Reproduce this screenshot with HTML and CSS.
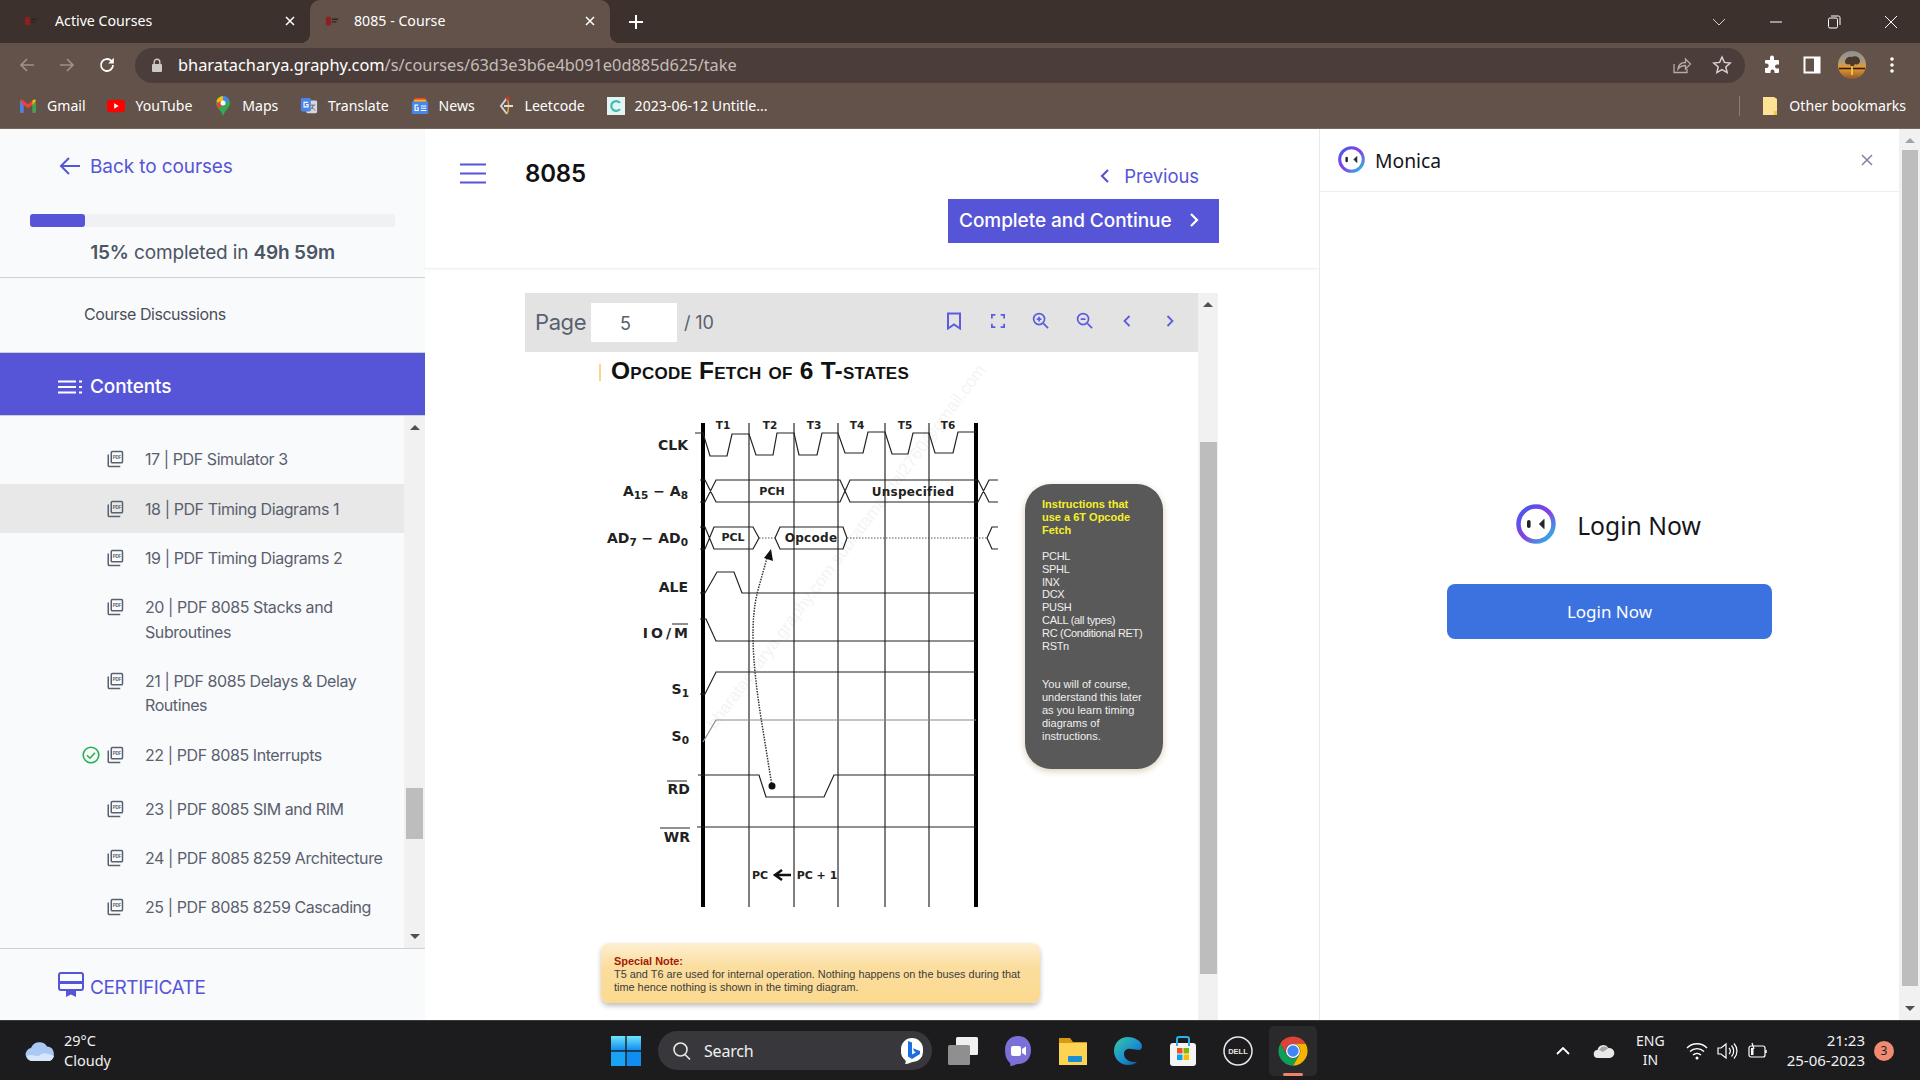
FILE: index.html
```html
<!DOCTYPE html>
<html lang="en">
<head>
    <meta charset="UTF-8">
    <meta name="viewport" content="width=device-width, initial-scale=1.0">
    <title>8085 - Course</title>
    <link rel="stylesheet" href="styles.css">
</head>
<body>
    <svg class="defs" width="0" height="0">
        <defs>
            <linearGradient id="monicaRing" x1="0" y1="0" x2="1" y2="1">
                <stop offset="0" stop-color="#3f5cf0"/>
                <stop offset="0.5" stop-color="#8a3fe0"/>
                <stop offset="1" stop-color="#1fc4e8"/>
            </linearGradient>
            <linearGradient id="winTile" x1="0" y1="0" x2="0" y2="1">
                <stop offset="0" stop-color="#6fe3fb"/>
                <stop offset="1" stop-color="#0f8ef0"/>
            </linearGradient>
            <linearGradient id="edgeFill" x1="0" y1="0" x2="1" y2="1">
                <stop offset="0" stop-color="#36c9a0"/>
                <stop offset="0.55" stop-color="#1b8fd0"/>
                <stop offset="1" stop-color="#0c4f9c"/>
            </linearGradient>
            <linearGradient id="sunset" x1="0" y1="0" x2="0" y2="1">
                <stop offset="0" stop-color="#8d9097"/>
                <stop offset="0.4" stop-color="#b09a78"/>
                <stop offset="0.6" stop-color="#ee9a2e"/>
                <stop offset="1" stop-color="#8a5a30"/>
            </linearGradient>
            <symbol id="monica" viewBox="0 0 40 40">
                <circle cx="20" cy="20" r="17.5" fill="#fff" stroke="url(#monicaRing)" stroke-width="4.5"/>
                <rect x="11" y="16" width="3.6" height="8" rx="1.8" fill="#222"/>
                <path d="M28 15.5 L23.5 20 L28 24.5 V15.5Z" fill="#222" stroke="#222" stroke-linejoin="round"/>
            </symbol>
            <symbol id="pdf" viewBox="0 0 24 24">
                <rect x="7" y="2" width="15" height="15" rx="1.5" fill="none" stroke="currentColor" stroke-width="2"/>
                <path d="M3 6v14.5A1.5 1.5 0 0 0 4.5 22H19" fill="none" stroke="currentColor" stroke-width="2"/>
                <text x="14.5" y="11.8" text-anchor="middle" class="pdf-mark">PDF</text>
            </symbol>
        </defs>
    </svg>

    <header class="chrome">
        <div class="tabstrip">
            <div class="tab">
                <svg class="favicon" viewBox="0 0 16 16"><rect x="1" y="3" width="6" height="10" rx="2" fill="#8c1f1f"/><path d="M8 6h7M8 9h5" stroke="#2f2420" stroke-width="1.5"/></svg>
                <span class="tab-title">Active Courses</span>
                <svg class="tab-close" viewBox="0 0 12 12"><path d="M2 2l8 8M10 2l-8 8" stroke="#fff" stroke-width="1.5"/></svg>
            </div>
            <div class="tab tab-active">
                <svg class="favicon" viewBox="0 0 16 16"><rect x="1" y="3" width="6" height="10" rx="2" fill="#8c1f1f"/><path d="M8 6h7M8 9h5" stroke="#2f2420" stroke-width="1.5"/></svg>
                <span class="tab-title">8085 - Course</span>
                <svg class="tab-close" viewBox="0 0 12 12"><path d="M2 2l8 8M10 2l-8 8" stroke="#fff" stroke-width="1.5"/></svg>
            </div>
            <svg class="new-tab" viewBox="0 0 16 16"><path d="M8 1v14M1 8h14" stroke="#fff" stroke-width="2"/></svg>
            <div class="window-controls">
                <svg class="tab-search" viewBox="0 0 14 8"><path d="M1 1l6 6 6-6" fill="none" stroke="#d8d2cf" stroke-width="1"/></svg>
                <span class="win-btn"><svg viewBox="0 0 14 14" width="14" height="14"><path d="M1 7h12" stroke="#fff"/></svg></span>
                <span class="win-btn"><svg viewBox="0 0 14 14" width="14" height="14"><rect x="1.5" y="3" width="9" height="10" rx="1.5" fill="none" stroke="#fff"/><path d="M4 1h7.5A1.5 1.5 0 0 1 13 2.5V10" fill="none" stroke="#fff"/></svg></span>
                <span class="win-btn"><svg viewBox="0 0 14 14" width="14" height="14"><path d="M1 1l12 12M13 1L1 13" stroke="#fff"/></svg></span>
            </div>
        </div>

        <div class="toolbar">
            <span class="tool-btn"><svg viewBox="0 0 18 18" width="18" height="18"><path d="M16 9H3M9 3L3 9l6 6" fill="none" stroke="#9c928c" stroke-width="1.7"/></svg></span>
            <span class="tool-btn"><svg viewBox="0 0 18 18" width="18" height="18"><path d="M2 9h13M9 3l6 6-6 6" fill="none" stroke="#9c928c" stroke-width="1.7"/></svg></span>
            <span class="tool-btn"><svg viewBox="0 0 18 18" width="18" height="18"><path d="M15 9a6 6 0 1 1-1.8-4.3L15 6.5" fill="none" stroke="#fff" stroke-width="1.8"/><path d="M15.8 1.8v5.6h-5.6z" fill="#fff"/></svg></span>
            <div class="omnibox">
                <svg class="lock" viewBox="0 0 12 14" width="12" height="14"><rect x="1" y="6" width="10" height="8" rx="1" fill="#cfc9c5"/><path d="M3.2 6V4a2.8 2.8 0 0 1 5.6 0v2" fill="none" stroke="#cfc9c5" stroke-width="1.4"/></svg>
                <span class="url"><b class="url-host">bharatacharya.graphy.com</b>/s/courses/63d3e3b6e4b091e0d885d625/take</span>
                <span class="tool-btn"><svg viewBox="0 0 20 20" width="20" height="20"><path d="M2 9v8.5h13V14" fill="none" stroke="#b5aca7" stroke-width="1.3"/><path d="M6 14c.5-4 3.500-6.500 7.500-6.500V4l5 5-5 5v-3.500c-3 0-5.500 1-7.500 3.500z" fill="none" stroke="#b5aca7" stroke-width="1.3"/></svg></span>
                <span class="tool-btn"><svg viewBox="0 0 20 20" width="20" height="20"><path d="M10 2l2.400 5.400 5.800.6-4.400 3.900 1.300 5.700L10 14.700l-5.100 2.900 1.300-5.700L1.800 8l5.800-.6z" fill="none" stroke="#d8d2cf" stroke-width="1.500"/></svg></span>
            </div>
            <span class="tool-btn tool-first"><svg viewBox="0 0 20 20" width="20" height="20"><path d="M8 2.500a2 2 0 0 1 4 0V5h4a1 1 0 0 1 1 1v3.500h-2a2 2 0 0 0 0 4h2V17a1 1 0 0 1-1 1h-3.500v-1.500a2 2 0 0 0-4 0V18H4a1 1 0 0 1-1-1v-4h1.500a2.200 2.200 0 0 0 0-4.400H3V6a1 1 0 0 1 1-1h4z" fill="#fff"/></svg></span>
            <span class="tool-btn"><svg viewBox="0 0 20 20" width="20" height="20"><rect x="2.500" y="2.500" width="15" height="15" fill="none" stroke="#fff" stroke-width="2"/><rect x="12" y="3" width="5" height="14" fill="#fff"/></svg></span>
            <span class="tool-btn"><svg class="avatar" viewBox="0 0 28 28" width="28" height="28"><circle cx="14" cy="14" r="14" fill="url(#sunset)"/><path d="M7 11c0-4 4-6 7-5 3-2 8 0 8 4 0 3-3 4-5 3l-2 3h-2l-1-3c-2 1-5 0-5-2z" fill="#4a3a2c"/><path d="M1 17.500h26" stroke="#2e1c10" stroke-width="1.600"/><path d="M13 15h2v9h-2z" fill="#ffd23c" opacity="0.8"/></svg></span>
            <span class="tool-btn"><svg viewBox="0 0 6 20" width="6" height="20"><circle cx="3" cy="4" r="1.800" fill="#fff"/><circle cx="3" cy="10" r="1.800" fill="#fff"/><circle cx="3" cy="16" r="1.800" fill="#fff"/></svg></span>
        </div>

        <div class="bookmarks">
            <span class="bookmark"><svg viewBox="0 0 16 16" class="bm-icon"><path d="M1 3v11h3V7l4 3 4-3v7h3V3l-1.500-1L8 6.500 2.500 2z" fill="#ea4335"/><path d="M1 3v11h3V7z" fill="#4285f4"/><path d="M15 3v11h-3V7z" fill="#34a853"/><path d="M12 7l3-4-1.500-1L12 3.200z" fill="#fbbc05"/></svg>Gmail</span>
            <span class="bookmark"><svg viewBox="0 0 20 20" class="bm-icon"><rect y="3" width="20" height="14" rx="4" fill="#f00"/><path d="M8 7l5 3-5 3z" fill="#fff"/></svg>YouTube</span>
            <span class="bookmark"><svg viewBox="0 0 16 20" class="bm-icon"><path d="M8 0a7 7 0 0 1 7 7c0 4.500-5 7-7 13-2-6-7-8.500-7-13a7 7 0 0 1 7-7z" fill="#34a853"/><path d="M3 2.500A7 7 0 0 1 8 0v5L4.500 8.500 1.500 5z" fill="#fbbc05"/><path d="M8 0a7 7 0 0 1 6 3.500L11 7 8 4z" fill="#4285f4"/><path d="M1.400 8.500L5 5l3 3-4.500 5z" fill="#ea4335"/><circle cx="8" cy="7" r="2.500" fill="#fff"/></svg>Maps</span>
            <span class="bookmark"><svg viewBox="0 0 20 20" class="bm-icon"><rect x="7" y="4" width="12" height="14" rx="1.500" fill="#d4d8de"/><rect x="1" y="1" width="11" height="15" rx="1.500" fill="#4a86e8"/><path d="M9 6H4.500v5H9V8.500H6.800" fill="none" stroke="#fff" stroke-width="1.200"/><path d="M12 9h5M14.500 9c0 3-2 4.500-2.500 5M13 11c1 2 2.500 3 4 3.500" fill="none" stroke="#5f6368" stroke-width="1"/></svg>Translate</span>
            <span class="bookmark"><svg viewBox="0 0 20 20" class="bm-icon"><path d="M4 1h12v5H4z" fill="#ea4335"/><path d="M3 3h14v4H3z" fill="#fbbc05"/><rect x="1" y="5" width="18" height="14" rx="1.500" fill="#4a86e8"/><path d="M8 9H4.500v6H8v-3H6.300M11 10h6M11 12.500h6M11 15h6" fill="none" stroke="#fff" stroke-width="1.300"/></svg>News</span>
            <span class="bookmark"><svg viewBox="0 0 16 20" class="bm-icon"><path d="M9 2L3 10l6 8" fill="none" stroke="#d8d2cf" stroke-width="2"/><path d="M9 2c2 4 2 12 0 16" fill="none" stroke="#e8a33d" stroke-width="1.500"/><path d="M6 10h9" stroke="#ddd" stroke-width="2"/><circle cx="10" cy="2.500" r="2" fill="#c0392b"/></svg>Leetcode</span>
            <span class="bookmark"><svg viewBox="0 0 20 20" class="bm-icon"><rect width="20" height="20" fill="#e2f5f2"/><path d="M14.500 6.500a5.500 5.500 0 1 0 0 7" fill="none" stroke="#3dbdb0" stroke-width="2.400"/></svg>2023-06-12 Untitle...</span>
            <span class="bookmarks-sep"></span>
            <span class="bookmark"><svg viewBox="0 0 16 20" class="bm-icon"><path d="M1 1h11l3 2v16H1z" fill="#fde293"/><path d="M12 15h3v4h-3z" fill="#f4c542"/></svg>Other bookmarks</span>
        </div>
    </header>

    <div class="page">
        <aside class="sidebar">
            <a class="back-link"><svg viewBox="0 0 22 20" width="22" height="20"><path d="M21 10H2M10 2l-8 8 8 8" fill="none" stroke="#5655d7" stroke-width="2"/></svg>Back to courses</a>
            <div class="progress-track"><div class="progress-fill" style="width: 15%"></div></div>
            <p class="progress-text"><b>15%</b> completed in <b>49h 59m</b></p>
            <div class="discussions">Course Discussions</div>
            <div class="contents-bar">
                <svg viewBox="0 0 24 14" width="24" height="14"><path d="M0 1.500h18M0 7h18M0 12.500h18M21 1.500h3M21 7h3M21 12.500h3" stroke="#fff" stroke-width="2.200"/></svg>
                Contents
            </div>
            <div class="list-wrap">
                <ul class="lesson-list">
                    <li class="lesson"><span class="check-slot"></span><svg class="pdf-icon"><use href="#pdf"/></svg><span class="lesson-name">17 | PDF Simulator 3</span></li>
                    <li class="lesson lesson-current"><span class="check-slot"></span><svg class="pdf-icon"><use href="#pdf"/></svg><span class="lesson-name">18 | PDF Timing Diagrams 1</span></li>
                    <li class="lesson"><span class="check-slot"></span><svg class="pdf-icon"><use href="#pdf"/></svg><span class="lesson-name">19 | PDF Timing Diagrams 2</span></li>
                    <li class="lesson"><span class="check-slot"></span><svg class="pdf-icon"><use href="#pdf"/></svg><span class="lesson-name">20 | PDF 8085 Stacks and Subroutines</span></li>
                    <li class="lesson"><span class="check-slot"></span><svg class="pdf-icon"><use href="#pdf"/></svg><span class="lesson-name">21 | PDF 8085 Delays &amp; Delay Routines</span></li>
                    <li class="lesson lesson-done">
                        <span class="check-slot"><svg viewBox="0 0 18 18" width="18" height="18"><circle cx="9" cy="9" r="7.800" fill="none" stroke="#22b14c" stroke-width="1.600"/><path d="M5 9.200l3 3 5-5.500" fill="none" stroke="#22b14c" stroke-width="1.600"/></svg></span>
                        <svg class="pdf-icon"><use href="#pdf"/></svg><span class="lesson-name">22 | PDF 8085 Interrupts</span>
                    </li>
                    <li class="lesson lesson-after-done"><span class="check-slot"></span><svg class="pdf-icon"><use href="#pdf"/></svg><span class="lesson-name">23 | PDF 8085 SIM and RIM</span></li>
                    <li class="lesson"><span class="check-slot"></span><svg class="pdf-icon"><use href="#pdf"/></svg><span class="lesson-name">24 | PDF 8085 8259 Architecture</span></li>
                    <li class="lesson"><span class="check-slot"></span><svg class="pdf-icon"><use href="#pdf"/></svg><span class="lesson-name">25 | PDF 8085 8259 Cascading</span></li>
                    <li class="lesson"><span class="check-slot"></span><svg class="pdf-icon"><use href="#pdf"/></svg></li>
                </ul>
                <div class="scrollbar scrollbar-list">
                    <span class="arrow-up arrow-dark"></span>
                    <span class="thumb thumb-list"></span>
                    <span class="arrow-down arrow-dark"></span>
                </div>
            </div>
            <div class="certificate">
                <svg viewBox="0 0 26 25" width="26" height="25"><rect x="1" y="1" width="24" height="17" rx="2" fill="none" stroke="#5655d7" stroke-width="2"/><rect x="1" y="9" width="24" height="3" fill="#5655d7"/><path d="M8 17h10v8l-5-2.500L8 25z" fill="#5655d7"/></svg>
                CERTIFICATE
            </div>
        </aside>

        <main class="course-main">
            <div class="course-head">
                <svg class="hamburger" viewBox="0 0 26 21" width="26" height="21"><path d="M0 1.500h26M0 10.500h26M0 19.500h26" stroke="#5655d7" stroke-width="2"/></svg>
                <h1 class="lesson-title">8085</h1>
                <div class="head-actions">
                    <a class="prev-link"><svg viewBox="0 0 10 16" width="10" height="16"><path d="M8 2L2 8l6 6" fill="none" stroke="#5655d7" stroke-width="2.200"/></svg>Previous</a>
                    <button class="continue-btn">Complete and Continue<svg viewBox="0 0 10 16" width="10" height="16"><path d="M2 2l6 6-6 6" fill="none" stroke="#fff" stroke-width="2.200"/></svg></button>
                </div>
            </div>

            <div class="viewer">
                <div class="doc">
                    <div class="doc-bar">
                        <span class="page-word">Page</span>
                        <span class="page-input">5</span>
                        <span class="page-total">/ 10</span>
                        <span class="doc-tools">
                            <span class="doc-tool"><svg viewBox="0 0 16 18" width="16" height="18"><path d="M2 1.500h12v15l-6-4-6 4z" fill="none" stroke="#5d5ce0" stroke-width="2"/></svg></span>
                            <span class="doc-tool"><svg viewBox="0 0 16 16" width="14" height="14"><path d="M1 5V1h4M11 1h4v4M15 11v4h-4M5 15H1v-4" fill="none" stroke="#5d5ce0" stroke-width="2"/></svg></span>
                            <span class="doc-tool"><svg viewBox="0 0 18 18" width="17" height="17"><circle cx="7.500" cy="7.500" r="5.800" fill="none" stroke="#5d5ce0" stroke-width="1.800"/><path d="M12 12l5 5M5 7.500h5M7.500 5v5" fill="none" stroke="#5d5ce0" stroke-width="1.800"/></svg></span>
                            <span class="doc-tool"><svg viewBox="0 0 18 18" width="17" height="17"><circle cx="7.500" cy="7.500" r="5.800" fill="none" stroke="#5d5ce0" stroke-width="1.800"/><path d="M12 12l5 5M5 7.500h5" fill="none" stroke="#5d5ce0" stroke-width="1.800"/></svg></span>
                            <span class="doc-tool"><svg viewBox="0 0 10 14" width="10" height="14"><path d="M7.500 2L2.500 7l5 5" fill="none" stroke="#5d5ce0" stroke-width="1.800"/></svg></span>
                            <span class="doc-tool"><svg viewBox="0 0 10 14" width="10" height="14"><path d="M2.500 2l5 5-5 5" fill="none" stroke="#5d5ce0" stroke-width="1.800"/></svg></span>
                        </span>
                    </div>
                    <div class="slide">
                        <svg class="timing" viewBox="525 352 673 668" width="673" height="668">
                            <text class="wm" transform="translate(715 730) rotate(-53)">bharatacharya.graphy.com subratamandal2760@gmail.com</text>

                            <rect x="599" y="364" width="2" height="17" fill="#fbd68a"/>
                            <text x="611" y="378.500" class="slide-title">Opcode Fetch of 6 T-states</text>

                            <!-- grid -->
                            <path class="grid" d="M749 423V907M794 423V907M838 423V907M885 423V907M929 423V907"/>
                            <path class="rail" d="M703 423V907M976 423V907"/>

                            <!-- signals -->
                            <path class="sig" d="M695 433H703L710 456H727L732 434H749L756 455H773L777 433H794L799 455H817L822 433H838L845 453H863L868 432H885L892 454H908L913 433H929L935 453H953L958 432H976"/>
                            <path class="sig" d="M700 480H705L716 502H840L850 480H978L989 502H998M700 502H705L716 480H840L850 502H978L989 480H998"/>
                            <path class="sig" d="M700 527H705L714 549H753L759 538L753 527H714L705 549H700M775 538L780 527H843L847 538L843 549H780ZM998 527H992L987 538L992 549H998"/>
                            <path class="sig-dot" d="M759 538H775M847 538H987"/>
                            <path class="sig" d="M700 593H705L717 572H734L742 593H976"/>
                            <path class="sig" d="M700 619H706L716 641H976"/>
                            <path class="sig" d="M700 694H705L716 672H976"/>
                            <path class="sig sig-grey" d="M703 742L716 720H976"/>
                            <path class="sig" d="M698 775H759L766 797H824L834 775H976"/>
                            <path class="sig" d="M697 827H976"/>

                            <!-- read arrow -->
                            <path class="read-arrow" d="M772 786L761 718C752 660 750 620 758 590L767 558"/>
                            <path d="M764 558L771 549L773 561Z" fill="#111"/>
                            <circle cx="772" cy="786" r="3.500" fill="#111"/>
                            <path d="M775 875H791M782 870L775 875L782 880" fill="none" stroke="#111" stroke-width="2.500"/>

                            <!-- labels -->
                            <g class="labels">
                                <text x="688" y="450">CLK</text>
                                <text x="688" y="496">A<tspan class="sub" dy="3">15</tspan><tspan dy="-3"> − A</tspan><tspan class="sub" dy="3">8</tspan></text>
                                <text x="688" y="543">AD<tspan class="sub" dy="3">7</tspan><tspan dy="-3"> − AD</tspan><tspan class="sub" dy="3">0</tspan></text>
                                <text x="688" y="592">ALE</text>
                                <text x="691" y="638" class="label-wide">IO/M</text>
                                <text x="689" y="694">S<tspan class="sub" dy="3">1</tspan></text>
                                <text x="689" y="741">S<tspan class="sub" dy="3">0</tspan></text>
                                <text x="690" y="794">RD</text>
                                <text x="690" y="842">WR</text>
                            </g>
                            <path class="bar" d="M672 624H688M667 781H687M660 828H690"/>
                            <g class="times">
                                <text x="723" y="429">T1</text>
                                <text x="770" y="429">T2</text>
                                <text x="814" y="429">T3</text>
                                <text x="857" y="429">T4</text>
                                <text x="905" y="429">T5</text>
                                <text x="948" y="429">T6</text>
                            </g>
                            <g class="bus">
                                <text x="772" y="495">PCH</text>
                                <text x="913" y="496" class="bus-wide">Unspecified</text>
                                <text x="733" y="541">PCL</text>
                                <text x="811" y="542" class="bus-wide">Opcode</text>
                                <text x="760" y="879">PC</text>
                                <text x="817" y="879">PC + 1</text>
                            </g>
                        </svg>

                        <div class="callout">
                            <p class="callout-head">Instructions that use a 6T Opcode Fetch</p>
                            <p class="callout-list">PCHL<br>SPHL<br>INX<br>DCX<br>PUSH<br>CALL (all types)<br>RC (Conditional RET)<br>RSTn</p>
                            <p class="callout-foot">You will of course, understand this later as you learn timing diagrams of instructions.</p>
                        </div>
                        <div class="note">
                            <b>Special Note:</b><br>
                            T5 and T6 are used for internal operation. Nothing happens on the buses during that<br>
                            time hence nothing is shown in the timing diagram.
                        </div>
                    </div>
                </div>
                <div class="scrollbar scrollbar-doc">
                    <span class="arrow-up arrow-dark"></span>
                    <span class="thumb thumb-doc"></span>
                </div>
            </div>
        </main>

        <section class="monica">
            <div class="monica-head">
                <svg class="monica-logo"><use href="#monica"/></svg>
                <span class="monica-name">Monica</span>
                <svg class="monica-close" viewBox="0 0 12 12" width="12" height="12"><path d="M1 1l10 10M11 1L1 11" stroke="#7d84a3" stroke-width="1.500"/></svg>
            </div>
            <div class="monica-body">
                <div class="login-row">
                    <svg class="login-logo"><use href="#monica"/></svg>
                    <span class="login-title">Login Now</span>
                </div>
                <button class="login-btn">Login Now</button>
            </div>
        </section>

        <div class="scrollbar scrollbar-page">
            <span class="arrow-up"></span>
            <span class="thumb thumb-page"></span>
            <span class="arrow-down arrow-dark"></span>
        </div>
    </div>

    <footer class="taskbar">
        <div class="weather">
            <svg viewBox="0 0 32 24" width="32" height="24"><path d="M8 22a6.500 6.500 0 0 1-1-12.900A9 9 0 0 1 23 7.500 7.500 7.500 0 0 1 25 22z" fill="#a9c8f5"/><path d="M3 17c6-3 10 2 13-1s8-2 14 1c-1 3-3 5-5 5H8c-2 0-4-2-5-5z" fill="#d7e6fb"/></svg>
            <div class="weather-text"><span>29°C</span><span>Cloudy</span></div>
        </div>
        <div class="task-center">
            <svg class="win-logo" viewBox="0 0 30 30" width="30" height="30"><rect width="14.300" height="14.300" fill="url(#winTile)"/><rect x="15.700" width="14.300" height="14.300" fill="url(#winTile)"/><rect y="15.700" width="14.300" height="14.300" fill="#1aa3f5"/><rect x="15.700" y="15.700" width="14.300" height="14.300" fill="#0f8ef0"/></svg>
            <div class="search-pill">
                <svg viewBox="0 0 20 20" width="20" height="20"><circle cx="8.500" cy="8.500" r="6.500" fill="none" stroke="#e8e8e8" stroke-width="1.600"/><path d="M13 13.500l5 5" stroke="#e8e8e8" stroke-width="1.600"/></svg>
                <span>Search</span>
                <svg class="bing" viewBox="0 0 24 28" width="24" height="28"><path d="M12 1a11 11 0 0 1 11 11v3a10 10 0 0 1-10 10c-2 0-4 2-8 2 1-2 1-3 0-4A11 11 0 0 1 1 14v-2A11 11 0 0 1 12 1z" fill="#fff"/><path d="M8 4l4 1.500v12l4-2.300-2-1-1-3 7 2.800v3L12 22l-4-2.500z" fill="#1b6fe0"/></svg>
            </div>
            <svg class="task-icon" viewBox="0 0 32 32"><rect x="9" y="2" width="22" height="18" rx="1.500" fill="#f0f0f0"/><rect x="1" y="10" width="22" height="20" rx="1.500" fill="#8f8f8f"/></svg>
            <svg class="task-icon" viewBox="0 0 32 32"><path d="M16 1c8 0 13 6 13 14s-5 14-13 14c-2 0-4 2-8 2 1-2 0-3-1-4-3-3-4-7-4-12C3 7 8 1 16 1z" fill="#7b6fd8"/><rect x="9" y="11" width="10" height="10" rx="2" fill="#fff"/><path d="M20 14l4-2.500v9L20 18z" fill="#fff"/></svg>
            <svg class="task-icon" viewBox="0 0 32 32"><path d="M2 3h11l3 4h14v4H2z" fill="#d89a12"/><rect x="2" y="8" width="28" height="22" fill="#fcd353"/><rect x="11" y="21" width="14" height="6" rx="1" fill="#1a8fd8"/></svg>
            <svg class="task-icon" viewBox="0 0 48 48"><path d="M24 3C12 3 3 12 3 24c0 12 10 21 21 21 6 0 11-2 14-5-8 2-20-2-20-12 0-5 5-8 11-7 9 1 16 4 16-4C45 10 35 3 24 3z" fill="url(#edgeFill)"/></svg>
            <svg class="task-icon" viewBox="0 0 32 32"><rect x="3" y="8" width="26" height="23" rx="3" fill="#f4f4f4"/><path d="M10 11V4a2 2 0 0 1 2-2h8a2 2 0 0 1 2 2v7" fill="none" stroke="#2bb0e8" stroke-width="2"/><rect x="10" y="13" width="5.500" height="5.500" fill="#f25022"/><rect x="16.500" y="13" width="5.500" height="5.500" fill="#7fba00"/><rect x="10" y="19.500" width="5.500" height="5.500" fill="#00a4ef"/><rect x="16.500" y="19.500" width="5.500" height="5.500" fill="#ffb900"/></svg>
            <svg class="task-icon" viewBox="0 0 32 32"><circle cx="16" cy="16" r="14" fill="none" stroke="#e8e8e8" stroke-width="1.500"/><text x="16" y="19" text-anchor="middle" class="dell-mark">DELL</text></svg>
            <span class="task-active">
                <svg class="task-icon" viewBox="0 0 48 48"><path d="M5 13A22 22 0 0 1 43 13H24A11 11 0 0 0 14.500 29.500Z" fill="#db4437"/><path d="M5 13L14.500 29.500A11 11 0 0 0 33.500 29.500L24 46A22 22 0 0 1 5 13Z" fill="#0f9d58"/><path d="M24 13H43A22 22 0 0 1 24 46L33.500 29.500A11 11 0 0 0 24 13Z" fill="#f4b400"/><circle cx="24" cy="24" r="10.500" fill="#fff"/><circle cx="24" cy="24" r="8.500" fill="#4285f4"/></svg>
                <span class="task-underline"></span>
            </span>
        </div>
        <div class="tray">
            <svg viewBox="0 0 14 8" width="14" height="8"><path d="M1 7l6-6 6 6" fill="none" stroke="#fff" stroke-width="1.800"/></svg>
            <svg class="tray-cloud" viewBox="0 0 22 16" width="22" height="16"><path d="M5 15a4 4 0 0 1-.5-8A6 6 0 0 1 15.500 5 5 5 0 0 1 17 15z" fill="#e8e8e8"/><path d="M6 7a6 6 0 0 1 9.500-2L10 9z" fill="#a8a8a8"/></svg>
            <div class="lang"><span>ENG</span><span>IN</span></div>
            <svg class="tray-wifi" viewBox="0 0 22 18" width="22" height="18"><path d="M1 6a14 14 0 0 1 20 0M4 9.500a10 10 0 0 1 14 0M7 13a6 6 0 0 1 8 0" fill="none" stroke="#fff" stroke-width="1.400"/><circle cx="11" cy="16" r="1.500" fill="#fff"/></svg>
            <svg class="tray-vol" viewBox="0 0 22 18" width="22" height="18"><path d="M2 6h3l5-4v14l-5-4H2z" fill="none" stroke="#fff" stroke-width="1.200"/><path d="M13 6a4 4 0 0 1 0 6M15.500 3.500a8 8 0 0 1 0 11M18 1.500a11 11 0 0 1 0 15" fill="none" stroke="#fff" stroke-width="1.200"/></svg>
            <svg class="tray-bat" viewBox="0 0 22 18" width="22" height="18"><rect x="2" y="4" width="16" height="11" rx="2" fill="none" stroke="#fff" stroke-width="1.200"/><path d="M19 8v3" stroke="#fff" stroke-width="1.500"/><path d="M5 1l2 6" stroke="#fff" stroke-width="1.200"/><rect x="4" y="6" width="2.500" height="7" fill="#fff"/></svg>
            <div class="clock"><span>21:23</span><span>25-06-2023</span></div>
            <span class="notif">3</span>
        </div>
    </footer>
</body>
</html>
```

FILE: styles.css
```css
* {
    box-sizing: border-box;
}

html, body {
    margin: 0;
    padding: 0;
    width: 1920px;
    height: 1080px;
    overflow: hidden;
}

body {
    font-family: 'Inter', 'Liberation Sans', sans-serif;
    background-color: #fff;
    display: flex;
    flex-direction: column;
}

.defs {
    position: absolute;
}

p, h1, ul {
    margin: 0;
    padding: 0;
}

/* Browser chrome */
.chrome {
    height: 129px;
    flex: none;
    color: #fff;
    font-family: 'Noto Sans', sans-serif;
    background-color: #62524a;
    border-bottom: 1px solid #76685f;
}

.tabstrip {
    height: 43px;
    background-color: #3d312d;
    display: flex;
    align-items: center;
    padding-left: 8px;
}

.tab {
    width: 302px;
    height: 43px;
    display: flex;
    align-items: center;
    padding: 0 14px 2px 16px;
    gap: 17px;
    font-size: 14.200px;
}

.tab-active {
    width: 300px;
    background-color: #62524a;
    border-radius: 10px 10px 0 0;
    position: relative;
    padding-left: 15px;
    gap: 15px;
}

.tab-active::before,
.tab-active::after {
    content: '';
    position: absolute;
    bottom: 0;
    width: 10px;
    height: 10px;
}

.tab-active::before {
    left: -10px;
    background: radial-gradient(circle at 0 0, transparent 10px, #62524a 10.5px);
}

.tab-active::after {
    right: -10px;
    background: radial-gradient(circle at 100% 0, transparent 10px, #62524a 10.5px);
}

.favicon {
    width: 14px;
    height: 14px;
    flex: none;
}

.tab-title {
    flex: 1;
}

.tab-close {
    width: 12px;
    height: 12px;
    flex: none;
}

.new-tab {
    width: 16px;
    height: 16px;
    margin-left: 18px;
}

.window-controls {
    margin-left: auto;
    display: flex;
    align-items: center;
}

.tab-search {
    width: 14px;
    height: 8px;
    margin-right: 22px;
}

.win-btn {
    width: 57.500px;
    height: 36px;
    display: flex;
    align-items: center;
    justify-content: center;
}

.toolbar {
    height: 44px;
    display: flex;
    align-items: center;
    padding: 0 8px 0 7px;
}

.tool-btn {
    width: 40px;
    height: 35px;
    flex: none;
    display: flex;
    align-items: center;
    justify-content: center;
}

.tool-first {
    margin-left: 7px;
}

.omnibox {
    margin-left: 8px;
    flex: 1;
    height: 35px;
    background-color: #4b3e3a;
    border-radius: 18px;
    display: flex;
    align-items: center;
    padding: 0 3px 0 16px;
}

.lock {
    flex: none;
}

.url {
    flex: 1;
    margin-left: 15px;
    font-size: 16.350px;
    color: #c4bcb7;
}

.url-host {
    font-weight: 400;
    color: #fff;
}

.bookmarks {
    height: 41px;
    display: flex;
    align-items: center;
    padding: 0 14px 4px 19px;
    gap: 21.800px;
    font-size: 14.100px;
}

.bookmark {
    display: flex;
    align-items: center;
    gap: 10px;
    white-space: nowrap;
}

.bm-icon {
    width: 18px;
    height: 20px;
    flex: none;
}

.bookmarks-sep {
    width: 1px;
    height: 20px;
    margin-left: auto;
    background-color: #8a7d75;
}

/* Page columns */
.page {
    height: 891px;
    flex: none;
    display: flex;
}

.sidebar {
    width: 425px;
    flex: none;
    background-color: #f9fafc;
    display: flex;
    flex-direction: column;
}

.back-link {
    height: 74px;
    flex: none;
    display: flex;
    align-items: center;
    padding: 0 0 0 59px;
    gap: 9px;
    color: #5655d7;
    font-size: 19px;
    letter-spacing: -0.1px;
}

.progress-track {
    height: 13px;
    flex: none;
    margin: 11px 30px 0;
    background-color: #f0f1f4;
    border-radius: 3px;
}

.progress-fill {
    height: 100%;
    background-color: #5655d7;
    border-radius: 3px;
}

.progress-text {
    height: 51px;
    flex: none;
    text-align: center;
    line-height: 52px;
    font-size: 19px;
    letter-spacing: -0.15px;
    color: #4b5563;
    border-bottom: 1px solid #cfd0d3;
}

.progress-text b {
    font-weight: 600;
}

.discussions {
    height: 75px;
    flex: none;
    display: flex;
    align-items: center;
    padding: 0 0 2px 84px;
    font-size: 16px;
    letter-spacing: -0.45px;
    color: #4a4f57;
    border-bottom: 1px solid #cfd0d3;
}

.contents-bar {
    height: 63px;
    flex: none;
    display: flex;
    align-items: center;
    padding: 5px 0 0 58px;
    gap: 8px;
    color: #fff;
    background-color: #5655d7;
    font-size: 19px;
    font-weight: 500;
    letter-spacing: -0.1px;
    border-bottom: 1px solid #cfd0d3;
}

.list-wrap {
    height: 533px;
    flex: none;
    display: flex;
    border-bottom: 1px solid #cfd0d3;
    overflow: hidden;
}

.lesson-list {
    width: 404px;
    flex: none;
    list-style: none;
    padding-top: 18px;
}

.lesson {
    display: flex;
    align-items: flex-start;
    min-height: 49.500px;
    padding: 12.500px 0 12px 82px;
    font-size: 16px;
    line-height: 24.500px;
    letter-spacing: -0.42px;
    color: #59606e;
}

.lesson-current {
    background-color: #e8e8e8;
    padding-top: 13.500px;
    padding-bottom: 11px;
}

.lesson-done {
    padding-top: 13.500px;
    padding-bottom: 17px;
}

.lesson-after-done {
    min-height: 48.500px;
    padding-bottom: 11px;
}

.check-slot {
    width: 18px;
    height: 24px;
    flex: none;
    margin-right: 6px;
    display: flex;
    align-items: center;
}

.pdf-icon {
    width: 18px;
    height: 18px;
    flex: none;
    margin-top: 3px;
    margin-right: 21px;
    color: #59606e;
}

.pdf-mark {
    font-family: 'Liberation Sans', sans-serif;
    font-size: 6px;
    font-weight: 700;
    fill: #59606e;
}

.lesson-name {
    width: 246px;
}

.certificate {
    flex: 1;
    display: flex;
    align-items: center;
    padding: 6px 0 0 58px;
    gap: 6px;
    color: #5655d7;
    font-size: 19px;
    letter-spacing: -0.4px;
}

.certificate svg {
    position: relative;
    top: -3px;
}

/* Scrollbars */
.scrollbar {
    position: relative;
    flex: none;
    background-color: #f1f1f1;
}

.scrollbar-list {
    width: 21px;
}

.scrollbar-doc {
    width: 20px;
    background-color: #f1f1f1;
}

.scrollbar-page {
    width: 21px;
}

.thumb {
    position: absolute;
    background-color: #bdbdbd;
}

.thumb-list {
    left: 2px;
    right: 2px;
    top: 372px;
    height: 51px;
}

.thumb-doc {
    left: 2px;
    right: 1px;
    top: 149px;
    height: 532px;
}

.thumb-page {
    left: 3px;
    right: 2px;
    top: 21px;
    height: 836px;
}

.arrow-up,
.arrow-down {
    position: absolute;
    left: 50%;
    margin-left: -5px;
    width: 0;
    height: 0;
    border-left: 5px solid transparent;
    border-right: 5px solid transparent;
}

.arrow-up {
    top: 9px;
    border-bottom: 5px solid #a3a3a3;
}

.arrow-down {
    bottom: 9px;
    border-top: 5px solid #505050;
}

.arrow-up.arrow-dark {
    border-bottom-color: #505050;
}

/* Course column */
.course-main {
    width: 894px;
    flex: none;
    background-color: #fff;
    display: flex;
    flex-direction: column;
}

.course-head {
    height: 140px;
    flex: none;
    display: flex;
    padding: 0 100px 0 35px;
    border-bottom: 1px solid #f0f0f0;
    box-shadow: 0 1px 3px rgba(0, 0, 0, 0.04);
}

.hamburger {
    margin-top: 34px;
    flex: none;
}

.lesson-title {
    margin: 29px 0 0 39px;
    font-size: 24px;
    line-height: 32px;
    font-weight: 600;
    color: #111;
    letter-spacing: -0.2px;
}

.head-actions {
    margin-left: auto;
    display: flex;
    flex-direction: column;
    align-items: flex-end;
    padding-top: 33px;
}

.prev-link {
    display: flex;
    align-items: center;
    gap: 14px;
    padding-right: 20px;
    height: 28px;
    font-size: 18.500px;
    letter-spacing: -0.1px;
    color: #5655d7;
}

.continue-btn {
    width: 271px;
    height: 44px;
    margin-top: 9px;
    padding: 0 20px 2px 11px;
    display: flex;
    align-items: center;
    justify-content: space-between;
    border: none;
    color: #fff;
    background-color: #5655d7;
    font-family: inherit;
    font-size: 19px;
    font-weight: 500;
    letter-spacing: -0.05px;
}

.viewer {
    margin: 24px 0 0 100px;
    height: 727px;
    width: 693px;
    display: flex;
}

.doc {
    width: 673px;
    flex: none;
    display: flex;
    flex-direction: column;
}

.doc-bar {
    height: 59px;
    flex: none;
    display: flex;
    align-items: center;
    padding-left: 10px;
    color: #59606e;
    background-color: #e3e3e3;
}

.page-word {
    font-size: 22px;
    letter-spacing: -0.4px;
    width: 56px;
    position: relative;
    top: -1px;
}

.page-input {
    width: 86px;
    height: 39px;
    padding-left: 29px;
    line-height: 41px;
    font-size: 18px;
    background-color: #fff;
}

.page-total {
    margin-left: 7px;
    font-size: 18px;
    letter-spacing: -0.1px;
}

.doc-tools {
    margin-left: auto;
    padding-right: 6px;
    display: flex;
}

.doc-tool {
    width: 43.200px;
    height: 24px;
    display: flex;
    align-items: center;
    justify-content: center;
    position: relative;
    top: -2px;
}

.slide {
    position: relative;
    height: 668px;
    overflow: hidden;
    background-color: #fff;
}

.timing {
    display: block;
}

.wm {
    font-family: 'Liberation Sans', sans-serif;
    font-size: 17px;
    fill: #f4f4f4;
}

.slide-title {
    font-family: 'Liberation Sans', sans-serif;
    font-size: 24.500px;
    font-weight: 700;
    font-variant: small-caps;
    letter-spacing: 0.25px;
    fill: #111;
}

.grid {
    stroke: #555;
    stroke-width: 1.500;
    fill: none;
}

.rail {
    stroke: #000;
    stroke-width: 4;
    fill: none;
}

.sig {
    fill: none;
    stroke: #222;
    stroke-width: 1.200;
}

.sig-grey {
    stroke: #8a8a8a;
}

.sig-dot {
    fill: none;
    stroke: #555;
    stroke-width: 1;
    stroke-dasharray: 1.500 1.500;
}

.read-arrow {
    fill: none;
    stroke: #333;
    stroke-width: 1.500;
    stroke-dasharray: 1.500 1.200;
}

.bar {
    fill: none;
    stroke: #222;
    stroke-width: 1.200;
}

.labels text {
    font-family: 'DejaVu Sans', sans-serif;
    font-size: 14px;
    font-weight: 700;
    text-anchor: end;
    fill: #222;
}

.labels .label-wide {
    letter-spacing: 3px;
}

.labels .sub {
    font-size: 10.500px;
}

.times text,
.bus text {
    font-family: 'DejaVu Sans', sans-serif;
    font-weight: 700;
    text-anchor: middle;
    fill: #222;
}

.times text {
    font-size: 10.500px;
}

.bus text {
    font-size: 11px;
}

.bus .bus-wide {
    font-size: 12px;
    letter-spacing: 0.3px;
    font-weight: 600;
}

.callout {
    position: absolute;
    left: 500px;
    top: 132px;
    width: 138px;
    height: 285px;
    padding: 14px 14px 0 17px;
    border-radius: 26px;
    font-family: 'Liberation Sans', sans-serif;
    font-size: 11px;
    line-height: 13px;
    color: #efefef;
    background-color: #595959;
    box-shadow: 0 2px 7px #d8cdb8;
}

.callout-head {
    color: #f5f02a;
    font-weight: 700;
    margin-bottom: 13px;
}

.callout-list {
    margin-bottom: 26px;
    line-height: 12.800px;
    letter-spacing: -0.3px;
}

.note {
    position: absolute;
    left: 76px;
    top: 591px;
    width: 439px;
    height: 60px;
    padding: 12px 0 0 13px;
    border-radius: 8px;
    font-family: 'Liberation Sans', sans-serif;
    font-size: 10.900px;
    line-height: 13px;
    color: #3c3c3c;
    background: linear-gradient(#fdf0d2 0, #fbdd9e 40%, #fbd98f 100%);
    box-shadow: 0 3px 5px rgba(0, 0, 0, 0.25);
}

.note b {
    font-weight: 700;
    color: #a31a00;
}

/* Monica side panel */
.monica {
    width: 580px;
    flex: none;
    display: flex;
    flex-direction: column;
    background-color: #fff;
    border-left: 1px solid #e8eaee;
    font-family: 'Noto Sans', sans-serif;
}

.monica-head {
    height: 63px;
    flex: none;
    display: flex;
    align-items: center;
    padding: 0 26px 0 18px;
    border-bottom: 1px solid #eeeeee;
}

.monica-logo {
    width: 27px;
    height: 27px;
    flex: none;
    position: relative;
    top: -1px;
}

.monica-name {
    margin-left: 10px;
    font-size: 19.300px;
    color: #15151a;
}

.monica-close {
    margin-left: auto;
}

.monica-body {
    flex: 1;
    display: flex;
    flex-direction: column;
    align-items: center;
    padding-top: 312px;
}

.login-row {
    display: flex;
    align-items: center;
    gap: 21px;
    height: 40px;
    position: relative;
    left: -1px;
}

.login-logo {
    width: 40px;
    height: 40px;
}

.login-title {
    padding-top: 2px;
    font-size: 24.700px;
    color: #15151a;
}

.login-btn {
    width: 325px;
    height: 55px;
    margin-top: 40px;
    border: none;
    border-radius: 8px;
    color: #fff;
    background-color: #3b72e0;
    font-family: inherit;
    font-size: 17px;
}

/* Windows taskbar */
.taskbar {
    height: 60px;
    flex: none;
    position: relative;
    display: flex;
    align-items: center;
    color: #f0f0f0;
    background-color: #1c1c1f;
    border-top: 1px solid #3a3a3c;
    font-family: 'Noto Sans', sans-serif;
    font-size: 14px;
}

.weather {
    display: flex;
    align-items: center;
    gap: 8px;
    padding-left: 24px;
}

.weather-text {
    display: flex;
    flex-direction: column;
    margin-top: -2px;
    line-height: 20px;
    font-size: 14.500px;
}

.task-center {
    position: absolute;
    left: 611px;
    top: 0;
    height: 59px;
    display: flex;
    align-items: center;
}

.search-pill {
    width: 274px;
    height: 39px;
    margin-left: 17px;
    padding: 0 8px 0 14px;
    display: flex;
    align-items: center;
    gap: 12px;
    border-radius: 20px;
    font-size: 16px;
    letter-spacing: -0.2px;
    background-color: #38383c;
}

.bing {
    margin-left: auto;
}

.task-icon {
    width: 32px;
    height: 32px;
    flex: none;
    margin-left: 23px;
}

.search-pill + .task-icon {
    margin-left: 15px;
}

.dell-mark {
    font-family: 'Liberation Sans', sans-serif;
    font-size: 7.500px;
    font-weight: 700;
    fill: #e8e8e8;
}

.task-active {
    position: relative;
    width: 48px;
    height: 50px;
    margin-left: 15px;
    display: flex;
    align-items: center;
    justify-content: center;
    background-color: #2a2a2d;
    border-radius: 5px;
}

.task-active .task-icon {
    margin-left: 0;
}

.task-underline {
    position: absolute;
    left: 14px;
    bottom: 0;
    width: 20px;
    height: 3px;
    border-radius: 2px;
    background-color: #f0826a;
}

.tray {
    margin-left: auto;
    padding-right: 25px;
    display: flex;
    align-items: center;
}

.tray-cloud {
    margin-left: 23px;
}

.lang {
    margin: -2px 0 0 21px;
    display: flex;
    flex-direction: column;
    align-items: center;
    line-height: 19px;
}

.tray-wifi {
    margin-left: 21px;
}

.tray-vol {
    margin-left: 8px;
}

.tray-bat {
    margin-left: 9px;
}

.clock {
    margin: -2px 0 0 18px;
    display: flex;
    flex-direction: column;
    align-items: flex-end;
    line-height: 20px;
    font-size: 15px;
}

.notif {
    width: 20px;
    height: 20px;
    margin-left: 9px;
    margin-right: 1px;
    border-radius: 50%;
    text-align: center;
    font-size: 12px;
    line-height: 20px;
    color: #222;
    background-color: #f08a70;
}
```
